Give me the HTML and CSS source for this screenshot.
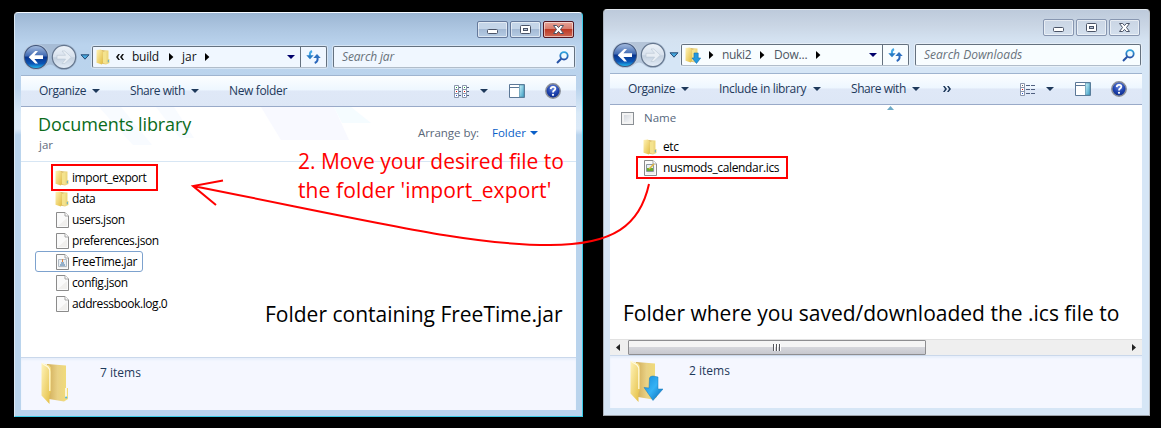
FILE: index.html
```
<!DOCTYPE html>
<html lang="en">
<head>
<meta charset="utf-8">
<title>Moving the calendar file</title>
<link rel="stylesheet" href="styles.css">
</head>
<body>
<svg class="defs" width="0" height="0">
  <defs>
    <linearGradient id="gold" x1="0" y1="0" x2="1" y2="1"><stop offset="0" stop-color="#fff3b8"/><stop offset="1" stop-color="#e3bd3f"/></linearGradient>
    <linearGradient id="goldback" x1="0" y1="0" x2="1" y2="0"><stop offset="0" stop-color="#cfaa55"/><stop offset=".5" stop-color="#e9d185"/><stop offset="1" stop-color="#f2dd78"/></linearGradient>
    <linearGradient id="down" x1="0" y1="0" x2="1" y2="1"><stop offset="0" stop-color="#168bd8"/><stop offset=".5" stop-color="#35b2f5"/><stop offset="1" stop-color="#0867b3"/></linearGradient>
    <linearGradient id="orb" x1="0" y1="0" x2="0" y2="1"><stop offset="0" stop-color="#a9bfe0"/><stop offset=".46" stop-color="#3f69b2"/><stop offset=".5" stop-color="#08338c"/><stop offset=".78" stop-color="#0b55b5"/><stop offset="1" stop-color="#25c5f5"/></linearGradient>
    <linearGradient id="glass" x1="0" y1="0" x2="0" y2="1"><stop offset="0" stop-color="#eef3f9"/><stop offset=".5" stop-color="#d7e1ed"/><stop offset=".53" stop-color="#c3d0df"/><stop offset="1" stop-color="#e5eef8"/></linearGradient>
    <linearGradient id="pane" x1="0" y1="0" x2="1" y2="1"><stop offset="0" stop-color="#c9f2fa"/><stop offset="1" stop-color="#3a9cc4"/></linearGradient>
    <radialGradient id="helpfill" cx=".5" cy=".3" r=".7"><stop offset="0" stop-color="#6b8be0"/><stop offset=".6" stop-color="#1c40ad"/><stop offset="1" stop-color="#0c2a86"/></radialGradient>
    <linearGradient id="lens" x1="0" y1="0" x2="0" y2="1"><stop offset="0" stop-color="#2fa3dd"/><stop offset="1" stop-color="#2552a8"/></linearGradient>

    <symbol id="i-nav" viewBox="0 0 56 28">
      <path d="M14 1H42A13 13 0 0 1 42 27Q36 27 32 23Q28 20 24 23Q20 27 14 27A13 13 0 0 1 14 1Z" fill="#93a6bd" fill-opacity=".5"/>
      <circle cx="14" cy="14" r="11.7" fill="url(#orb)" stroke="#43587d" stroke-width="1.2"/>
      <circle cx="14" cy="14" r="12.6" fill="none" stroke="#e8f0f9" stroke-opacity=".6" stroke-width=".7"/>
      <path d="M6.7 14.2L13.2 8H16L12.4 12.3H21V16.1H12.4L16 20.5H13.2Z" fill="#fff"/>
      <circle cx="42" cy="14" r="11.7" fill="url(#glass)" stroke="#64768e" stroke-width="1.2"/>
      <path d="M49.3 14.2L42.8 8H40L43.6 12.3H35V16.1H43.6L40 20.5H42.8Z" fill="#e7edf4" stroke="#b9c6d4" stroke-width=".6"/>
    </symbol>
    <symbol id="i-drop" viewBox="0 0 10 6"><path d="M1 .8H9L5 5.2Z" fill="#45a8df" stroke="#254a75"/></symbol>
    <symbol id="i-down" viewBox="0 0 8 4"><path d="M0 0H8L4 4Z" fill="currentColor"/></symbol>
    <symbol id="i-right" viewBox="0 0 5 8"><path d="M0 0L4.4 4L0 8Z" fill="#000"/></symbol>
    <symbol id="i-chev" viewBox="0 0 8 6"><path d="M0 0H1.700L4 3L1.700 6H0L2 3ZM4 0H5.700L8 3L5.700 6H4L6 3Z" fill="currentColor"/></symbol>
    <symbol id="i-folder" viewBox="0 0 14 16">
      <path d="M5 1L12.5 1.5V10H13.5V14L10 15.5L5 14.5Z" fill="url(#goldback)"/>
      <path d="M.5 1L5 .5L6.7 2.2V13.5L5.8 15.5L.5 13.8Z" fill="url(#gold)"/>
      <path d="M6.8 3L10.5 2V14.7L7 14Z" fill="#f4e38d"/>
      <path d="M12.3 10.8V13.3" stroke="#5aa9cc"/>
    </symbol>
    <symbol id="i-folder-dl" viewBox="0 0 16 17">
      <use href="#i-folder" width="14" height="16"/>
      <path d="M9 6H13.2V11H15.7L11.5 16.5L7 11H9Z" fill="#2399df" stroke="#1370ae" stroke-width=".6"/>
    </symbol>
    <symbol id="i-big" viewBox="0 0 34 43">
      <path d="M7 2L26 3.5V26H28V37L24 39.5L9 37Z" fill="url(#goldback)"/>
      <path d="M1.5 1L9.5 3.5Q11.5 5 11 8V29L9.5 33.5V42L1.5 33.5Z" fill="url(#gold)"/>
      <path d="M1.5 1L8 5Q10 7 9.8 10V29" fill="none" stroke="#fffae0" stroke-width="1.2"/>
      <path d="M26 26V35" stroke="#fff" stroke-width="1.5"/><circle cx="26.2" cy="35.5" r="1.1" fill="#55b8de"/>
    </symbol>
    <symbol id="i-bigdown" viewBox="0 0 34 43">
      <use href="#i-big" width="34" height="43"/>
      <path d="M20.5 18Q21 16 24 16L29 17V29H34L24 40.5L15 27.5L20 28Z" fill="url(#down)" stroke="#1479be" stroke-width=".5"/>
    </symbol>
    <symbol id="i-file" viewBox="0 0 13 16">
      <path d="M.5 .5H9L12.5 4V15.5H.5Z" fill="#fafafa" stroke="#8b8b8b"/><path d="M9 .5V4H12.5" fill="#fff" stroke="#a5a5a5"/>
      <path d="M2 14L11 6V14Z" fill="#f0efed"/>
    </symbol>
    <symbol id="i-refresh" viewBox="0 0 16 14">
      <path d="M6 1Q3.3 2.3 4 6" fill="none" stroke="#46a8e5" stroke-width="2"/><path d="M.3 5.2H7.7L4 9.2Z" fill="#267bc5"/>
      <path d="M8.700 13Q12.6 11.5 11.3 7" fill="none" stroke="#2a66bb" stroke-width="2"/><path d="M7.300 8L11 4L14.700 8Z" fill="#2d71c0"/>
    </symbol>
    <symbol id="i-search" viewBox="0 0 13 13"><circle cx="8" cy="4.8" r="3.7" fill="#eefaff" stroke="url(#lens)" stroke-width="1.8"/><path d="M5.2 7.8L1 12" stroke="#2652a5" stroke-width="2"/></symbol>
    <symbol id="i-list" viewBox="0 0 16 13">
      <path d="M.5 .5H4.5V12.5H.5ZM.5 4.5H4.5M.5 8.5H4.5M8.5 .5H12.5V12.5H8.5ZM8.5 4.5H12.5M8.5 8.5H12.5" fill="#fff" stroke="#8a96ac"/>
      <path d="M5 2.5H7M5 6.5H7M5 10.5H7M13 2.5H15M13 6.5H15M13 10.5H15" stroke="#506080"/>
      <path d="M2 2h1v1h-1zM10 2h1v1h-1z" fill="#19a33a"/><path d="M2 6h1v1h-1zM10 6h1v1h-1z" fill="#e01010"/><path d="M2 10h1v1h-1zM10 10h1v1h-1z" fill="#2450d0"/>
    </symbol>
    <symbol id="i-details" viewBox="0 0 16 13">
      <path d="M.5 .5H4.5V12.5H.5ZM.5 4.5H4.5M.5 8.5H4.5" fill="#fff" stroke="#8a96ac"/>
      <path d="M6 2.5H10M11 2.5H15M6 6.5H10M11 6.5H15M6 10.5H10M11 10.5H15" stroke="#506080"/>
      <path d="M2 2h1v1h-1z" fill="#666"/><path d="M2 6h1v1h-1z" fill="#e01010"/><path d="M2 10h1v1h-1z" fill="#2450d0"/>
    </symbol>
    <symbol id="i-pane" viewBox="0 0 16 14"><path d="M.5 .5H15.5V13.5H.5Z" fill="#fff" stroke="#5b7796"/><path d="M1 3.5H10" stroke="#5b7796"/><path d="M10.5 1H15V13H10.5Z" fill="url(#pane)" stroke="#538ca8" stroke-width=".7"/></symbol>
    <symbol id="i-help" viewBox="0 0 16 16"><circle cx="8" cy="8" r="7.2" fill="url(#helpfill)" stroke="#8b8f98" stroke-width="1.5"/><path d="M5.7 6.1Q5.9 3.7 8.2 3.8Q10.4 3.9 10.3 5.8Q10.2 7 9 7.6Q8 8.2 8 9.4" fill="none" stroke="#fff" stroke-width="1.8"/><circle cx="8" cy="11.8" r="1.1" fill="#fff"/></symbol>
    <symbol id="i-min" viewBox="0 0 31 17"><rect x="10.5" y="8.5" width="10" height="4" rx="1" fill="#fff" stroke="#4b5467"/></symbol>
    <symbol id="i-max" viewBox="0 0 31 17"><rect x="10.5" y="4.5" width="10" height="8" rx="1" fill="#fff" stroke="#4b5467"/><rect x="13.5" y="7.5" width="4" height="2" fill="#b7c4d6" stroke="#4b5467"/></symbol>
    <symbol id="i-close" viewBox="0 0 31 17"><path d="M10.5 4.5H13.7L15.5 6.6L17.3 4.5H20.5L17.5 8.5L20.5 12.5H17.3L15.5 10.4L13.7 12.5H10.5L13.5 8.5Z" fill="#fff" stroke="#4b5467" stroke-linejoin="round"/></symbol>
  </defs>
</svg>

<main class="desktop">
  <section class="window active">
    <header class="caption">
      <span class="cap"><svg width="31" height="17"><use href="#i-min"/></svg></span>
      <span class="cap"><svg width="31" height="17"><use href="#i-max"/></svg></span>
      <span class="cap close"><svg width="31" height="17"><use href="#i-close"/></svg></span>
    </header>
    <nav class="navbar">
      <svg class="orbs" width="56" height="28"><use href="#i-nav"/></svg>
      <svg class="recent" width="10" height="6"><use href="#i-drop"/></svg>
      <div class="address">
        <div class="crumbs">
          <svg class="loc" width="14" height="16"><use href="#i-folder"/></svg>
          <svg class="chev" width="8" height="6"><use href="#i-chev" transform="matrix(-1 0 0 1 8 0)"/></svg>
          <span class="t-build">build</span>
          <svg width="5" height="8"><use href="#i-right"/></svg>
          <span class="t-jar">jar</span>
          <svg width="5" height="8"><use href="#i-right"/></svg>
        </div>
        <svg class="hist" width="8" height="4"><use href="#i-down"/></svg>
        <span class="refresh"><svg width="16" height="14"><use href="#i-refresh"/></svg></span>
      </div>
      <div class="search"><span>Search jar</span><svg width="13" height="13"><use href="#i-search"/></svg></div>
    </nav>
    <div class="client">
      <div class="toolbar">
        <span class="cmd w-org">Organize</span><svg class="arr" width="8" height="4"><use href="#i-down"/></svg>
        <span class="cmd w-share">Share with</span><svg class="arr" width="8" height="4"><use href="#i-down"/></svg>
        <span class="cmd w-new">New folder</span>
        <div class="tools">
          <svg width="16" height="13"><use href="#i-list"/></svg>
          <svg class="view" width="8" height="4"><use href="#i-down"/></svg>
          <svg class="preview" width="16" height="14"><use href="#i-pane"/></svg>
          <svg class="help" width="16" height="16"><use href="#i-help"/></svg>
        </div>
      </div>
      <div class="library">
        <svg class="rays" width="555" height="54"><path d="M78 0H100L131 38H112ZM135 0H153L173 31H159Z" fill="#f8fbff"/><path d="M240 0H313L328 33H260Z" fill="#f8f9ff"/><path d="M313 0H330L350 16H321Z" fill="#f5fcff"/></svg>
        <div><h1>Documents library</h1><p>jar</p></div>
        <div class="arrange"><span class="w-arr">Arrange by:</span><span class="w-folder">Folder</span><svg width="8" height="4"><use href="#i-down"/></svg></div>
      </div>
      <ul class="files">
        <li class="dir marked"><svg width="14" height="16"><use href="#i-folder"/></svg><span class="n1">import_export</span></li>
        <li class="dir"><svg width="14" height="16"><use href="#i-folder"/></svg><span>data</span></li>
        <li><svg width="13" height="16"><use href="#i-file"/></svg><span class="n3">users.json</span></li>
        <li><svg width="13" height="16"><use href="#i-file"/></svg><span class="n4">preferences.json</span></li>
        <li class="selected"><svg width="13" height="16"><use href="#i-file"/><path d="M2.5 5.5H10.5V12.5H2.5Z" fill="#e7edf2" stroke="#b0bac4"/><path d="M4 11H9M5 9H8" stroke="#41719e"/><path d="M6.5 8V5" stroke="#e4833c"/></svg><span class="n5">FreeTime.jar</span></li>
        <li><svg width="13" height="16"><use href="#i-file"/></svg><span class="n6">config.json</span></li>
        <li><svg width="13" height="16"><use href="#i-file"/></svg><span class="n7">addressbook.log.0</span></li>
      </ul>
      <footer class="status"><svg width="34" height="43"><use href="#i-big"/></svg><span>7 items</span></footer>
    </div>
  </section>

  <section class="window idle">
    <header class="caption">
      <span class="cap"><svg width="31" height="17"><use href="#i-min"/></svg></span>
      <span class="cap"><svg width="31" height="17"><use href="#i-max"/></svg></span>
      <span class="cap"><svg width="31" height="17"><use href="#i-close"/></svg></span>
    </header>
    <nav class="navbar">
      <svg class="orbs" width="56" height="28"><use href="#i-nav"/></svg>
      <svg class="recent" width="10" height="6"><use href="#i-drop"/></svg>
      <div class="address">
        <div class="crumbs">
          <svg class="loc" width="16" height="17"><use href="#i-folder-dl"/></svg>
          <svg width="5" height="8"><use href="#i-right"/></svg>
          <span class="t-nuki">nuki2</span>
          <svg width="5" height="8"><use href="#i-right"/></svg>
          <span class="t-dow">Dow...</span>
          <svg width="5" height="8"><use href="#i-right"/></svg>
        </div>
        <svg class="hist" width="8" height="4"><use href="#i-down"/></svg>
        <span class="refresh"><svg width="16" height="14"><use href="#i-refresh"/></svg></span>
      </div>
      <div class="search"><span>Search Downloads</span><svg width="13" height="13"><use href="#i-search"/></svg></div>
    </nav>
    <div class="client">
      <div class="toolbar">
        <span class="cmd w-org">Organize</span><svg class="arr" width="8" height="4"><use href="#i-down"/></svg>
        <span class="cmd w-incl">Include in library</span><svg class="arr" width="8" height="4"><use href="#i-down"/></svg>
        <span class="cmd w-share">Share with</span><svg class="arr" width="8" height="4"><use href="#i-down"/></svg>
        <svg class="more" width="8" height="6"><use href="#i-chev"/></svg>
        <div class="tools">
          <svg width="16" height="13"><use href="#i-details"/></svg>
          <svg class="view" width="8" height="4"><use href="#i-down"/></svg>
          <svg class="preview" width="16" height="14"><use href="#i-pane"/></svg>
          <svg class="help" width="16" height="16"><use href="#i-help"/></svg>
        </div>
      </div>
      <div class="columns"><i class="check"></i><span>Name</span><svg class="sort" width="7" height="4"><path d="M0 4L3.5 0L7 4Z" fill="#6eaac7"/></svg></div>
      <ul class="files">
        <li class="dir"><svg width="14" height="16"><use href="#i-folder"/></svg><span>etc</span></li>
        <li class="marked"><svg width="13" height="16"><use href="#i-file"/><path d="M2.5 4.5H9.500V11.5H2.5Z" fill="#e4eef5" stroke="#8c979f"/><path d="M3 8H9V11H3Z" fill="#69aa32"/><path d="M5 9L10 4" stroke="#e4b83d" stroke-width="1.5"/></svg><span class="n8">nusmods_calendar.ics</span></li>
      </ul>
      <div class="scroll">
        <svg width="17" height="15"><path d="M10 4V11L6 7.5Z" fill="#222"/></svg>
        <div class="thumb"><i></i><i></i><i></i></div>
        <svg width="17" height="15"><path d="M7 4V11L11 7.5Z" fill="#222"/></svg>
      </div>
      <footer class="status"><svg width="34" height="43"><use href="#i-bigdown"/></svg><span>2 items</span></footer>
    </div>
  </section>

  <p class="note step"><span class="s1">2. Move your desired file to</span><br><span class="s2">the folder 'import_export'</span></p>
  <p class="note left">Folder containing FreeTime.jar</p>
  <p class="note right">Folder where you saved/downloaded the .ics file to</p>
  <svg class="arrow" width="1161" height="428" fill="none" stroke="#f00" stroke-width="2"><path d="M649 184C640 225 614 245 550 245C470 245 390 225 193 186M223 180.500L193 186L216 205"/></svg>
</main>
</body>
</html>
```
FILE: styles.css
```
*, *::before, *::after { box-sizing: border-box; }
body { margin: 0; background: #000; font: 11.5px/16px "Open Sans", "Noto Sans", sans-serif; color: #000; }
h1, p, ul { margin: 0; padding: 0; font-weight: 400; }
svg { display: block; flex: none; }
span { white-space: nowrap; }
.defs { position: absolute; }
.desktop { position: relative; width: 1161px; height: 428px; overflow: hidden; }

.window { position: absolute; display: flex; flex-direction: column; border: 1px solid; border-radius: 4px 4px 0 0; }
.active { left: 14px; top: 12px; width: 569px; height: 405px; padding: 0 6px 6px;
  border-color: #f4f9ff #3ccbe6 #3ccbe6 #dce9f5;
  background: linear-gradient(#9bb6d3, #a7c0dc 10px, #afc8e3 18px, #bad3ed 32px, #bbd4ed 75px, #d9e9f7 100px, #dceaf8 116px, #bad4ed 122px); }
.idle { left: 603px; top: 9px; width: 547px; height: 407px; padding: 0 7px 7px 6px;
  border-color: #e1e7ed #b9bfc6 #9da3aa #aeb6bf;
  background: linear-gradient(#bdcadb, #c9d5e4 15px, #d4e2f1 30px, #d6e6f6 50px); }

.caption { display: flex; justify-content: flex-end; gap: 2px; height: 30px; padding: 8px 2px 0 0; }
.idle .caption { height: 31px; padding: 9px 1px 0 0; }
.cap { width: 31px; height: 17px; border: 1px solid #65799b; border-radius: 2px; box-shadow: inset 0 0 0 1px #ffffff88; background: linear-gradient(#c4d5e8 50%, #a4bad5 50%, #b6cce4); }
.cap svg { margin: -1px; }
.idle .cap { border-color: #8796b0; background: linear-gradient(#cad5e4, #d3dfed); }
.cap.close { border-color: #541722; background: linear-gradient(#e6a397, #d77b6b 48%, #bd3a25 50%, #cd6855); }
.idle .cap { margin-left: -1px; margin-right: 1px; }

.navbar { display: flex; align-items: center; height: 28px; }
.orbs { margin-left: 1px; }
.recent { margin-left: 2px; }
.address, .search { display: flex; align-items: center; height: 22px; border: 1px solid #64717f; border-bottom-color: #b1bdca; border-radius: 2px; background: #f0f7ff; box-shadow: 0 0 0 1px #ffffff66; }
.address { width: 235px; margin-left: 2px; padding-left: 3px; }
.idle .address { width: 228px; }
.idle .address, .idle .search { background: #f8fdff; }
.crumbs { display: flex; align-items: center; flex: 1; color: #111; }
.crumbs > span { font-size: 12px; }
.idle .crumbs { color: #4d5662; }
.chev { margin: 0 8px 0 6px; }
.t-build { width: 37px; letter-spacing: -.25px; }
.t-jar { width: 19px; margin-left: 8px; }
.crumbs .t-jar + svg { margin-left: 4px; }
.idle .loc + svg { margin-left: 8px; }
.t-nuki { width: 38px; margin-left: 8px; letter-spacing: -.35px; }
.t-dow { width: 42px; margin-left: 9px; letter-spacing: -.2px; }
.hist { color: #00006b; margin-right: 5px; }
.refresh { display: flex; justify-content: center; align-items: center; width: 26px; height: 20px; border-left: 1px solid #64717f; }
.search { width: 242px; margin-left: 6px; padding: 0 5px 0 8px; justify-content: space-between; color: #68727b; font-style: italic; font-size: 12px; letter-spacing: -.15px; }
.idle .search { width: 226px; letter-spacing: .02px; }

.client { display: flex; flex-direction: column; flex: 1; margin-top: 4px; background: #fff; min-height: 0; }
.toolbar { display: flex; align-items: center; flex: none; height: 32px; padding-left: 18px; border-top: 1px solid #9fb4cf; border-bottom: 1px solid #99aac8; color: #1e395b;
  background: linear-gradient(#fcfeff, #eef7ff 46%, #dfe8f7 50%, #dde7f6); }
.cmd { font-size: 12px; }
.arr { margin-right: 30px; }
.w-org { width: 53px; letter-spacing: -.4px; }
.w-share { width: 61px; letter-spacing: -.45px; }
.w-new { letter-spacing: -.35px; }
.w-incl { width: 94px; letter-spacing: -.35px; }
.more { margin-left: -7px; }
.tools { display: flex; align-items: center; margin-left: auto; padding-right: 15px; }
.view { margin-left: 10px; }
.preview { margin-left: 21px; }
.help { margin-left: 20px; }

.library { position: relative; display: flex; justify-content: space-between; flex: none; height: 55px; padding: 5px 38px 0 18px; border-bottom: 1px solid #d7e6f4; }
.rays { position: absolute; left: 0; top: 0; }
.library div { position: relative; }
h1 { margin-left: -1px; font-size: 18px; line-height: 24px; color: #0b6b1b; letter-spacing: -.1px; }
.library p { color: #5f6b7d; line-height: 17px; }
.arrange { display: flex; align-items: center; height: 16px; margin-top: 13px; color: #5a6779; }
.w-arr { width: 74px; letter-spacing: -.05px; }
.w-folder { width: 38px; }
.w-folder, .arrange svg { color: #0a5fc8; }

.files { list-style: none; flex: 1; padding: 5px 0 0 14px; font-size: 12px; letter-spacing: -.42px; }
.files li { display: flex; align-items: center; width: 108px; height: 21px; padding-left: 21px; position: relative; }
.files li svg { margin-right: 3px; }
.files li.dir { padding-left: 20px; }
.n5 { letter-spacing: -.4px; }
.n8 { letter-spacing: -.35px; }
.selected::before { content: ""; position: absolute; inset: 0; border: 1px solid #7da2ce; border-radius: 3px; }
.marked::after { content: ""; position: absolute; left: 16px; top: -3px; width: 107px; height: 27px; border: 2px solid #f00; }
.columns { position: relative; display: flex; align-items: center; height: 27px; padding: 0 0 1px 11px; color: #56677d; }
.check { width: 13px; height: 13px; margin-right: 10px; border: 1px solid #8a8f94; background: linear-gradient(135deg, #cbd0d7, #fff); box-shadow: inset 0 0 0 2px #f3f3f3; }
.sort { position: absolute; left: 277px; top: 1px; }
.idle .files { padding: 4px 0 0 13px; }
.idle .files li svg { margin-right: 6px; }
.idle .marked::after { left: 13px; top: -1px; width: 152px; height: 23px; }

.scroll { display: flex; flex: none; height: 16px; border-top: 1px solid #e1e1e1; background: #efefef; }
.thumb { display: flex; justify-content: center; align-items: center; gap: 1px; width: 298px; height: 15px; margin: 0 auto 0 1px; border: 1px solid #8e8e91; border-radius: 1px; background: linear-gradient(#f5f5f5 45%, #d5d6db 50%, #c7c8cf); }
.thumb i { width: 2px; height: 7px; background: linear-gradient(90deg, #55565a 50%, #fff 50%); }

.status { display: flex; flex: none; height: 53px; padding: 4px 0 0 19px; border-top: 1px solid #cad8eb; background: #f5f7ff; box-shadow: inset 0 2px 2px #e7effb; color: #1e395b; }
.status span { margin: 3px 0 0 26px; font-size: 12px; }

.note { position: absolute; font: 21px/29px "Open Sans", "Noto Sans", sans-serif; white-space: nowrap; }
.step { left: 298px; top: 147px; color: #f00; }
.s2 { letter-spacing: .12px; }
.left { left: 265px; top: 300px; }
.right { left: 623px; top: 299px; }
.arrow { position: absolute; left: 0; top: 0; }
```
